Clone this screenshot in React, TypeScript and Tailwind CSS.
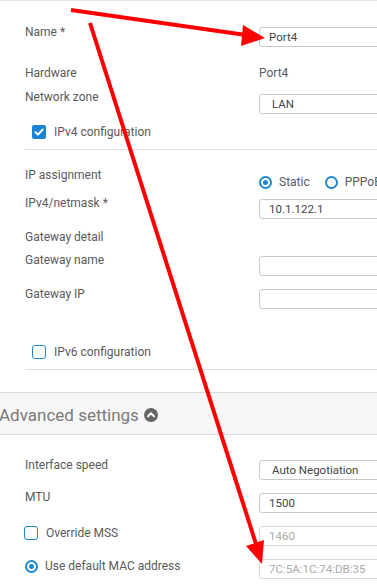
import React from "react";

const BLUE = "#1b87d2";

function Label({ children }: { children: React.ReactNode }) {
  return (
    <div className="w-[259px] shrink-0 pl-[25px] text-[12px] leading-[16px] text-[#5a5a5a]">
      {children}
    </div>
  );
}

function Input({ value, pt, disabled, select }: { value?: string; pt: number; disabled?: boolean; select?: boolean }) {
  return (
    <div style={{ paddingTop: pt }}>
      <div
        className={
          "h-[20px] w-[160px] rounded-[3px] border border-[#c9c9c9] bg-white text-[11.5px] leading-[18px] " +
          (select ? "pl-[12px] " : "pl-[9px] ") +
          (disabled ? "text-[#aaa] border-[#d8d8d8]" : "text-[#444]")
        }
      >
        {value}
      </div>
    </div>
  );
}

function Checkbox({ checked }: { checked?: boolean }) {
  if (checked)
    return (
      <div className="flex h-[14px] w-[14px] items-center justify-center rounded-[2px]" style={{ background: BLUE }}>
        <svg width="10" height="10" viewBox="0 0 10 10">
          <path d="M1.5 5.2 L4 7.6 L8.6 2.6" stroke="white" strokeWidth="2" fill="none" strokeLinecap="round" strokeLinejoin="round" />
        </svg>
      </div>
    );
  return <div className="h-[14px] w-[14px] rounded-[3px] border-[1.5px]" style={{ borderColor: BLUE }} />;
}

function Radio({ checked }: { checked?: boolean }) {
  return (
    <div className="flex h-[13px] w-[13px] items-center justify-center rounded-full border-2" style={{ borderColor: BLUE }}>
      {checked && <div className="h-[5px] w-[5px] rounded-full" style={{ background: BLUE }} />}
    </div>
  );
}

export default function App() {
  return (
    <div
      className="relative h-[585px] w-[377px] overflow-hidden bg-white"
      style={{ fontFamily: "Roboto, 'Liberation Sans', sans-serif" }}
    >
      <div className="h-[1px] w-full bg-[#e3e3e3]" />
      <div className="h-[23px]" />
      {/* Name */}
      <div className="flex h-[41px]">
        <Label>Name *</Label>
        <Input value="Port4" pt={3} />
      </div>
      {/* Hardware */}
      <div className="flex h-[24px]">
        <Label>Hardware</Label>
        <div className="text-[12px] leading-[16px] text-[#5a5a5a]">Port4</div>
      </div>
      {/* Network zone */}
      <div className="flex h-[35px]">
        <Label>Network zone</Label>
        <Input value="LAN" pt={5} select />
      </div>
      {/* IPv4 configuration */}
      <div className="flex h-[16px] items-center pl-[32px]">
        <Checkbox checked />
        <span className="ml-[8px] text-[12px] leading-[16px] text-[#5a5a5a]">IPv4 configuration</span>
      </div>
      <div className="h-[9px]" />
      <div className="ml-[25px] h-[1px] bg-[#dedede]" />
      <div className="h-[17px]" />
      {/* IP assignment */}
      <div className="flex h-[28px]">
        <Label>IP assignment</Label>
        <div className="flex items-center pt-[2px] text-[12px] leading-[16px] text-[#5a5a5a]">
          <Radio checked />
          <span className="ml-[7px]">Static</span>
          <div className="ml-[15px]">
            <Radio />
          </div>
          <span className="ml-[7px] whitespace-nowrap">PPPoE</span>
        </div>
      </div>
      {/* IPv4/netmask */}
      <div className="flex h-[34px]">
        <Label>IPv4/netmask *</Label>
        <Input value="10.1.122.1" pt={4} />
      </div>
      {/* Gateway detail */}
      <div className="flex h-[23px]">
        <Label>Gateway detail</Label>
      </div>
      {/* Gateway name */}
      <div className="flex h-[34px]">
        <Label>Gateway name</Label>
        <Input value="" pt={4} />
      </div>
      {/* Gateway IP */}
      <div className="flex h-[58px]">
        <Label>Gateway IP</Label>
        <Input value="" pt={3} />
      </div>
      {/* IPv6 */}
      <div className="flex h-[16px] items-center pl-[32px]">
        <Checkbox />
        <span className="ml-[8px] text-[12px] leading-[16px] text-[#5a5a5a]">IPv6 configuration</span>
      </div>
      <div className="h-[9px]" />
      <div className="ml-[25px] h-[1px] bg-[#dedede]" />
      <div className="h-[22px]" />
      {/* Advanced settings band */}
      <div className="flex h-[43px] items-center border-y border-[#dcdcdc] bg-[#f7f7f7]">
        <span className="-ml-[1px] mt-[3px] text-[17px] leading-[20px] text-[#7a7a7a]">Advanced settings</span>
        <svg className="ml-[5px] mt-[3px]" width="14" height="14" viewBox="0 0 14 14">
          <circle cx="7" cy="7" r="7" fill="#666" />
          <path d="M4 8.3 L7 5.3 L10 8.3" stroke="white" strokeWidth="2" fill="none" strokeLinecap="round" strokeLinejoin="round" />
        </svg>
      </div>
      <div className="h-[22px]" />
      {/* Interface speed */}
      <div className="flex h-[32px]">
        <Label>Interface speed</Label>
        <Input value="Auto Negotiation" pt={3} select />
      </div>
      {/* MTU */}
      <div className="flex h-[36px]">
        <Label>MTU</Label>
        <Input value="1500" pt={4} />
      </div>
      {/* Override MSS */}
      <div className="flex h-[33px]">
        <div className="flex h-[16px] w-[259px] shrink-0 items-center pl-[24px]">
          <Checkbox />
          <span className="ml-[8px] text-[12px] leading-[16px] text-[#5a5a5a]">Override MSS</span>
        </div>
        <Input value="1460" pt={1} disabled />
      </div>
      {/* MAC */}
      <div className="flex h-[27px]">
        <div className="flex h-[16px] w-[259px] shrink-0 items-center pl-[25px]">
          <Radio checked />
          <span className="ml-[7px] text-[12px] leading-[16px] text-[#5a5a5a]">Use default MAC address</span>
        </div>
        <Input value="7C:5A:1C:74:DB:35" pt={1} disabled />
      </div>

      {/* Red annotation arrows */}
      <svg className="pointer-events-none absolute left-0 top-0" width="377" height="585" viewBox="0 0 377 585">
        <line x1="71" y1="10" x2="246" y2="35" stroke="#ff0000" strokeWidth="4" />
        <polygon points="265,38 243,25 241,46" fill="#ff0000" />
        <line x1="90" y1="23" x2="256" y2="544" stroke="#ff0000" strokeWidth="4" />
        <polygon points="262,564 246,546 264,540" fill="#ff0000" />
      </svg>
    </div>
  );
}
